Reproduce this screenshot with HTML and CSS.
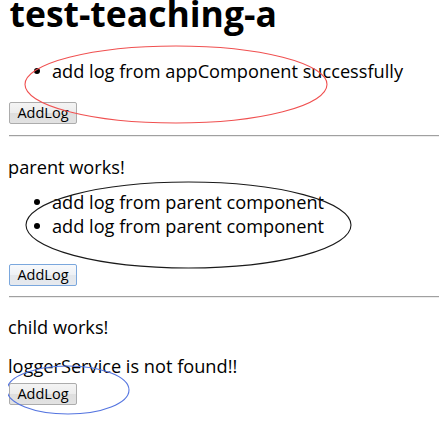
FILE: index.html
```html
<!DOCTYPE html>
<html lang="en">
<head>
<meta charset="utf-8">
<title>test-teaching-a</title>
<link rel="stylesheet" href="styles.css">
</head>
<body>
<svg class="marks" width="439" height="444" viewBox="0 0 439 444" aria-hidden="true">
  <ellipse class="mark-red" cx="176" cy="84.5" rx="151" ry="38.5"/>
  <ellipse class="mark-black" cx="188.5" cy="225" rx="162.5" ry="43"/>
  <ellipse class="mark-blue" cx="68" cy="390" rx="61" ry="24"/>
</svg>
<h1 class="title">test-teaching-a</h1>
<section class="app">
  <ul class="logs logs-app">
    <li>add log from appComponent successfully</li>
  </ul>
  <button class="btn btn-app" type="button">AddLog</button>
</section>
<hr class="rule rule-1">
<section class="parent">
  <p class="note note-parent">parent works!</p>
  <ul class="logs logs-parent">
    <li>add log from parent component</li>
    <li>add log from parent component</li>
  </ul>
  <button class="btn btn-focus" type="button">AddLog</button>
</section>
<hr class="rule rule-2">
<section class="child">
  <p class="note note-child">child works!</p>
  <p class="note note-msg">loggerService is not found!!</p>
  <button class="btn btn-child" type="button">AddLog</button>
</section>
</body>
</html>
```
FILE: styles.css
```css
html, body {
  background: #ffffff;
}
body {
  margin: 0 0 0 8px;
  font-family: "Open Sans", "Noto Sans", sans-serif;
  font-size: 18.2px;
  line-height: 24px;
  color: #000000;
  position: relative;
  height: 444px;
  overflow: hidden;
}
.marks {
  position: absolute;
  left: -8px;
  top: 0;
  pointer-events: none;
  z-index: 2;
}
.marks ellipse {
  fill: none;
  stroke-width: 1.1;
}
.mark-red { stroke: #f05050; }
.mark-black { stroke: #1a1a1a; }
.mark-blue { stroke: #5575e0; }

.title {
  margin: 0 0 0 1.5px;
  font-size: 35.5px;
  line-height: 26.5px;
  font-weight: 700;
}
.logs {
  list-style: none;
  margin: 0;
  padding: 0 0 0 44px;
}
.logs li::before {
  content: "";
  display: inline-block;
  width: 6px;
  height: 6px;
  border-radius: 50%;
  background: #000000;
  margin-left: -18px;
  margin-right: 12px;
  vertical-align: 4px;
}
.logs-app { margin-top: 32.5px; }
.logs-parent { margin-top: 11px; }

.note { margin: 0; }
.note-parent { margin-top: 18px; }
.note-child { margin-top: 17px; }
.note-msg { margin-top: 15px; }

.btn {
  display: block;
  box-sizing: border-box;
  width: 68px;
  height: 22px;
  margin-left: 1px;
  padding: 0;
  font-family: "Open Sans", "Noto Sans", sans-serif;
  font-size: 14.5px;
  line-height: 20px;
  color: #000000;
  border: 1px solid #acacac;
  border-radius: 2px;
  background: linear-gradient(#f4f4f4 0%, #ececec 50%, #dedede 51%, #e2e2e2 100%);
}
.btn-app { margin-top: 19px; }
.btn-focus {
  margin-top: 26px;
  border-color: #7aa7dd;
  background: linear-gradient(#f7f9fc 0%, #eef1f5 50%, #e3e7ec 51%, #e6e9ee 100%);
}
.btn-child { margin-top: 5px; }

.rule {
  height: 0;
  margin: 0 0 0 1px;
  border: 0;
  border-top: 1px solid #a0a0a0;
  border-bottom: 1px solid #ececec;
}
.rule-1 { margin-top: 11px; }
.rule-2 { margin-top: 10px; }
```
